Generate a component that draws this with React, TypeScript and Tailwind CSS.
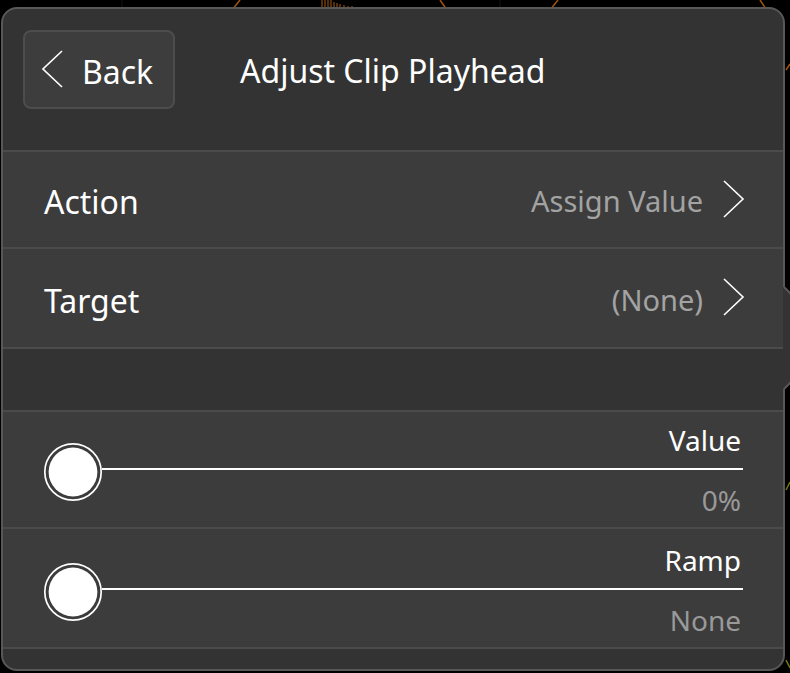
import React from 'react';

// Adjust Clip Playhead — popover panel

const font = { fontFamily: '"Noto Sans", "Open Sans", sans-serif' };

function ChevronLeft() {
  return (
    <svg width="22" height="40" viewBox="0 0 22 40" className="shrink-0">
      <polyline points="20,1 1,19 20,37" fill="none" stroke="#ffffff" strokeWidth="1.6" />
    </svg>
  );
}

function ChevronRight() {
  return (
    <svg width="22" height="40" viewBox="0 0 22 40" className="shrink-0">
      <polyline points="1,1 20,19 1,37" fill="none" stroke="#ffffff" strokeWidth="1.6" />
    </svg>
  );
}

function Thumb() {
  return (
    <svg width="60" height="60" viewBox="0 0 60 60" className="shrink-0 -mr-[1px]">
      <circle cx="30" cy="30" r="28.2" fill="#3c3c3c" stroke="#ffffff" strokeWidth="1.7" />
      <circle cx="30" cy="30" r="24.4" fill="#ffffff" />
    </svg>
  );
}

function Separator() {
  return <div className="h-[2px] bg-[#4b4b4b] shrink-0" />;
}

interface NavRowProps {
  label: string;
  value: string;
  height: string;
}

function NavRow({ label, value, height }: NavRowProps) {
  return (
    <div className={`${height} bg-[#3c3c3c] flex items-center pl-[41px] pr-[38px] shrink-0`}>
      <span className="pt-[5px] text-[32px] leading-[32px] text-white">{label}</span>
      <span className="ml-auto pt-[2px] text-[29px] leading-[29px] text-[#a3a3a3]">{value}</span>
      <span className="ml-[20px]">
        <ChevronRight />
      </span>
    </div>
  );
}

interface SliderRowProps {
  label: string;
  value: string;
  padding: string;
}

function SliderRow({ label, value, padding }: SliderRowProps) {
  return (
    <div className={`${padding} bg-[#3c3c3c] flex items-center pl-[40px] pr-[40px] shrink-0`}>
      <div className="mt-[3px]">
        <Thumb />
      </div>
      <div className="flex-1 flex flex-col items-end">
        <span className="text-[28px] leading-[28px] text-white pr-[2px]">{label}</span>
        <div className="mt-[14px] h-[2px] w-full bg-white" />
        <span className="mt-[16px] text-[28px] leading-[28px] text-[#999999] pr-[2px]">{value}</span>
      </div>
    </div>
  );
}

export default function App() {
  return (
    <div className="relative w-[790px] h-[673px] bg-black overflow-hidden pt-[7px] pl-[1px]" style={font}>
      {/* background canvas glimpses */}
      <svg className="absolute inset-0" width="790" height="673" viewBox="0 0 790 673">
        <line x1="122" y1="0" x2="122" y2="10" stroke="#151515" strokeWidth="1" />
        <line x1="330" y1="0" x2="330" y2="10" stroke="#151515" strokeWidth="1" />
        <line x1="500" y1="0" x2="500" y2="10" stroke="#151515" strokeWidth="1" />
        <path d="M232 10 L240 0" stroke="#a0560e" strokeWidth="1.5" fill="none" />
        <path d="M447 10 L440 0" stroke="#a0560e" strokeWidth="1.5" fill="none" />
        <path d="M550 10 L558 0" stroke="#a0560e" strokeWidth="1.5" fill="none" />
        <path d="M768 12 L760 0" stroke="#a0560e" strokeWidth="1.5" fill="none" />
        <path d="M322 8 L322 0 M325 8 L325 0 M328 8 L328 0 M331 8 L331 0 M334 8 L334 2 M337 8 L337 3 M340 8 L340 4 M344 8 L344 5 M348 8 L348 6 M352 8 L352 6" stroke="#8a4a10" strokeWidth="1.2" fill="none" />
        <path d="M786 70 L790 64" stroke="#a0560e" strokeWidth="1.5" fill="none" />
        <path d="M786 490 L790 482" stroke="#6f7a10" strokeWidth="1.5" fill="none" />
        <path d="M786 660 L790 668" stroke="#6f7a10" strokeWidth="1.5" fill="none" />
      </svg>

      <div className="relative w-[784px] h-[664px] rounded-[16px] border-2 border-[#585858] bg-[#333333] flex flex-col overflow-hidden">
        {/* header */}
        <div className="h-[141px] shrink-0 flex items-start pl-[20px] pt-[21px]">
          <button className="w-[152px] h-[79px] rounded-[8px] border-2 border-[#4d4d4d] bg-[#3d3d3d] flex items-center pl-[17px]">
            <ChevronLeft />
            <span className="ml-[18px] pt-[4px] text-[32px] leading-[32px] text-white">Back</span>
          </button>
          <h1 className="ml-[65px] mt-[25px] text-[32px] leading-[32px] text-white font-normal">
            Adjust Clip Playhead
          </h1>
        </div>
        <Separator />
        <NavRow label="Action" value="Assign Value" height="h-[95px]" />
        <Separator />
        <NavRow label="Target" value="(None)" height="h-[98px]" />
        <Separator />
        <div className="h-[61px] shrink-0" />
        <Separator />
        <SliderRow label="Value" value="0%" padding="pt-[14px] pb-[13px]" />
        <Separator />
        <SliderRow label="Ramp" value="None" padding="pt-[17px] pb-[13px]" />
        <Separator />
      </div>

      {/* popover arrow on the right edge */}
      <svg className="absolute left-[783px] top-[287px]" width="10" height="104" viewBox="0 0 10 104">
        <polygon points="0,0 1,0 8,7 8,95 1,102 0,102" fill="#333333" />
        <polyline points="1,0 8,7 8,95 1,102" fill="none" stroke="#585858" strokeWidth="2" />
      </svg>
    </div>
  );
}
